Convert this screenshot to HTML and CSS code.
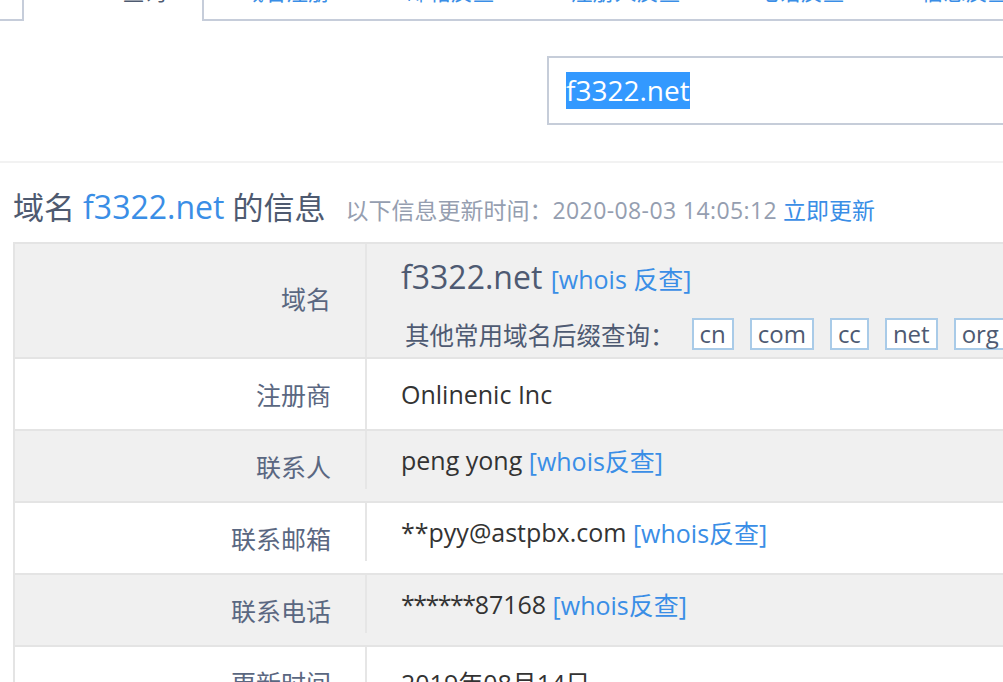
FILE: index.html
```html
<!DOCTYPE html>
<html lang="zh-CN">
<head>
<meta charset="utf-8">
<title>域名 f3322.net 的信息</title>
<link rel="stylesheet" href="styles.css">
</head>
<body>
<div class="tabs">
  <div class="tab-spacer"></div>
  <div class="tab active">Whois查询</div>
  <div class="tab narrow">域名注册</div>
  <div class="tab">邮箱反查</div>
  <div class="tab wide">注册人反查</div>
  <div class="tab">电话反查</div>
  <div class="tab">信息反查</div>
</div>

<div class="search">
  <div class="search-box"><span class="sel">f3322.net</span></div>
</div>

<div class="heading">
  <span class="h-title">域名 <span class="h-domain">f3322.net</span> 的信息</span>
  <span class="h-sub">以下信息更新时间：<span class="h-time">2020-08-03 14:05:12</span> <a class="link" href="#">立即更新</a></span>
</div>

<div class="info">
  <div class="row grey main">
    <div class="label main-label">域名</div>
    <div class="value main-value">
      <div class="domain-line">f3322.net <a class="link small" href="#">[whois 反查]</a></div>
      <div class="suffix-line">
        <span class="sfx-label">其他常用域名后缀查询：</span>
        <span class="sfx">cn</span>
        <span class="sfx">com</span>
        <span class="sfx">cc</span>
        <span class="sfx">net</span>
        <span class="sfx">org</span>
        <span class="sfx">info</span>
      </div>
    </div>
  </div>
  <div class="row">
    <div class="label">注册商</div>
    <div class="value">Onlinenic Inc</div>
  </div>
  <div class="row grey">
    <div class="label">联系人</div>
    <div class="value short">peng yong&nbsp;<a class="link small" href="#">[whois反查]</a></div>
  </div>
  <div class="row">
    <div class="label">联系邮箱</div>
    <div class="value short">**pyy@astpbx.com&nbsp;<a class="link small" href="#">[whois反查]</a></div>
  </div>
  <div class="row grey">
    <div class="label">联系电话</div>
    <div class="value short"><span class="stars">******</span>87168&nbsp;<a class="link small" href="#">[whois反查]</a></div>
  </div>
  <div class="row">
    <div class="label">更新时间</div>
    <div class="value">2019年08月14日</div>
  </div>
</div>
</body>
</html>
```

FILE: styles.css
```css
html, body {
  margin: 0;
  padding: 0;
  overflow: hidden;
  background: #ffffff;
}

body {
  font-family: "Open Sans", "Noto Sans CJK SC", sans-serif;
  color: #333333;
}

a.link {
  color: #3a8ee6;
  text-decoration: none;
}

/* ---------- tabs ---------- */
.tabs {
  display: flex;
  height: 60px;
  margin-top: -39px;
  box-sizing: border-box;
}

.tab-spacer {
  flex: none;
  width: 22px;
  border-bottom: 2px solid #c6cdda;
}

.tab {
  flex: none;
  width: 165px;
  box-sizing: border-box;
  border-bottom: 2px solid #c6cdda;
  padding-top: 19px;
  text-align: center;
  font-size: 22px;
  line-height: 22px;
  color: #3a8ee6;
}

.tab.narrow { width: 164px; }
.tab.wide { width: 185px; }

.tab.active {
  width: 182px;
  border: 2px solid #c6cdda;
  border-bottom: none;
  border-radius: 4px 4px 0 0;
  padding-top: 17px;
  color: #4e5a70;
}

/* ---------- search ---------- */
.search {
  height: 142px;
  box-sizing: border-box;
  padding: 35px 0 0 547px;
  border-bottom: 2px solid #f2f2f2;
}

.search-box {
  width: 560px;
  height: 69px;
  box-sizing: border-box;
  border: 2px solid #c6cdd9;
  padding: 14px 0 0 17px;
}

.sel {
  display: inline-block;
  background: #3399ff;
  color: #ffffff;
  font-size: 28px;
  line-height: 37px;
}

/* ---------- heading ---------- */
.heading {
  display: flex;
  align-items: baseline;
  padding: 24px 0 0 13px;
  white-space: nowrap;
}

.h-title {
  font-size: 31px;
  line-height: 40px;
  color: #4e5a70;
}

.h-domain {
  color: #3a8ee6;
  font-size: 32px;
}

.h-sub {
  margin-left: 20px;
  font-size: 23px;
  color: #959eb0;
}

.h-time { letter-spacing: 0.4px; }

/* ---------- info table ---------- */
.info {
  margin: 15px 0 0 13px;
  width: 1100px;
  border-top: 2px solid #e4e4e4;
  border-left: 2px solid #e4e4e4;
}

.row {
  display: flex;
  height: 70px;
  border-bottom: 2px solid #e4e4e4;
  background: #ffffff;
}

.row.grey { background: #f0f0f0; }
.row.main { height: 113px; }

.label {
  flex: none;
  width: 350px;
  box-sizing: border-box;
  padding-right: 34px;
  display: flex;
  align-items: center;
  justify-content: flex-end;
  font-size: 25px;
  color: #5a6781;
}

.label.main-label { padding-bottom: 5px; }

.value {
  flex: 1;
  border-left: 2px solid #e6e6e6;
  padding-left: 34px;
  display: flex;
  align-items: center;
  font-size: 25px;
  color: #333333;
  white-space: nowrap;
}

.value.short {
  align-self: flex-start;
  height: 58px;
}

.stars { letter-spacing: -1.5px; }

.link.small { font-size: 25px; }

.value.main-value {
  flex-direction: column;
  align-items: flex-start;
  justify-content: flex-start;
  padding-top: 13px;
  box-sizing: border-box;
}

.domain-line {
  font-size: 32px;
  line-height: 40px;
  color: #4e5a72;
}

.domain-line .link.small { font-size: 25px; }

.suffix-line {
  margin-top: 19px;
  padding-left: 4px;
  display: flex;
  align-items: center;
  gap: 16px;
  height: 32px;
  font-size: 24px;
  color: #4e5a72;
}

.sfx-label {
  margin-right: 1px;
  font-size: 24.5px;
}

.sfx {
  height: 32px;
  box-sizing: border-box;
  border: 2px solid #a9cbe8;
  background: #ffffff;
  padding: 0 6px;
  line-height: 28px;
  font-size: 24px;
  color: #4e5a72;
}
```
